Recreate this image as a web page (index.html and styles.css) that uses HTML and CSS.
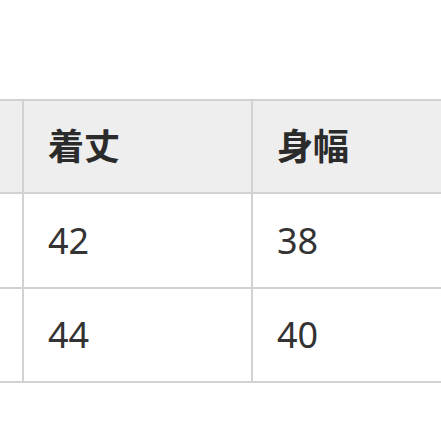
FILE: index.html
```html
<!DOCTYPE html>
<html lang="ja">
<head>
<meta charset="utf-8">
<link rel="stylesheet" href="styles.css">
</head>
<body>
<div class="wrap">
  <table class="size-table">
    <colgroup>
      <col class="col-first">
      <col class="col-data">
      <col class="col-data">
    </colgroup>
    <thead>
      <tr><th></th><th>着丈</th><th>身幅</th></tr>
    </thead>
    <tbody>
      <tr><td></td><td>42</td><td>38</td></tr>
      <tr class="last"><td></td><td>44</td><td>40</td></tr>
    </tbody>
  </table>
</div>
</body>
</html>
```
FILE: styles.css
```css
html, body {
  margin: 0;
  padding: 0;
  background: #ffffff;
  overflow: hidden;
}
.wrap {
  padding-top: 99px;
  width: 441px;
  overflow: hidden;
}
.size-table {
  border-collapse: collapse;
  margin-left: -178px;
  table-layout: fixed;
  width: 658px;
  font-family: "Noto Sans", "Noto Sans CJK JP", sans-serif;
  font-size: 36px;
  color: #333333;
}
.col-first { width: 200px; }
.col-data { width: 229px; }
.size-table th,
.size-table td {
  border: 2px solid #d2d2d2;
  height: 93px;
  padding: 0 0 0 24px;
  text-align: left;
  vertical-align: middle;
  line-height: 1;
}
.size-table th {
  height: 91px;
  background: #eeeeee;
  font-weight: bold;
  color: #2b2b2b;
}
.size-table .last td {
  height: 92px;
}
.size-table td {
  font-weight: normal;
}
```
